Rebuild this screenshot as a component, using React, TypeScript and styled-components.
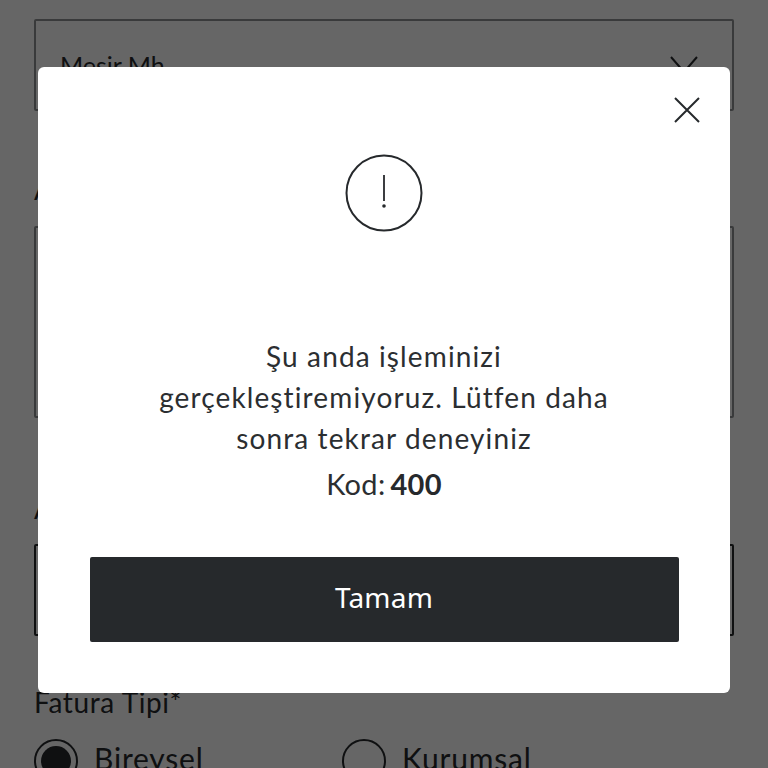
import React from "react";
import styled, { createGlobalStyle } from "styled-components";

const Global = createGlobalStyle`
  html, body { margin: 0; padding: 0; background: #fff; }
  body { font-family: "Lato", "Noto Sans", sans-serif; color: #26292c; width: 768px; height: 768px; overflow: hidden; }
`;

const Form = styled.div`
  box-sizing: border-box;
  width: 768px;
  height: 768px;
  overflow: hidden;
  padding: 19px 34px 0;
  display: flex;
  flex-direction: column;
`;

const Field = styled.div<{ $h: number; $dark?: boolean; $mb: number }>`
  box-sizing: border-box;
  flex: none;
  height: ${(p) => p.$h}px;
  margin-bottom: ${(p) => p.$mb}px;
  border: 2px solid ${(p) => (p.$dark ? "#26292c" : "#8f9193")};
  border-radius: 2px;
  padding: 26px 32px 0 24px;
  display: flex;
  justify-content: space-between;
  font-size: 25px;
  line-height: 36px;
`;

const Label = styled.div<{ $mb: number }>`
  flex: none;
  font-size: 28px;
  letter-spacing: 0.6px;
  line-height: 36px;
  margin-bottom: ${(p) => p.$mb}px;
`;

const RadioRow = styled.div`
  flex: none;
  display: flex;
  margin-top: 19px;
`;

const RadioItem = styled.div`
  width: 308px;
  display: flex;
  align-items: flex-start;
  gap: 16px;
  font-size: 30px;
  letter-spacing: 0.8px;
  line-height: 38px;
`;

const Radio = styled.span<{ $on?: boolean }>`
  box-sizing: border-box;
  width: 44px;
  height: 44px;
  border-radius: 50%;
  border: 2px solid #26292c;
  display: flex;
  align-items: center;
  justify-content: center;
  &::after {
    content: "";
    width: 30px;
    height: 30px;
    border-radius: 50%;
    background: ${(p) => (p.$on ? "#26292c" : "transparent")};
  }
`;

const Overlay = styled.div`
  position: fixed;
  inset: 0;
  background: rgba(0, 0, 0, 0.6);
  display: flex;
  align-items: flex-start;
  justify-content: center;
`;

const Modal = styled.div`
  position: relative;
  box-sizing: border-box;
  margin-top: 67px;
  width: 692px;
  height: 626px;
  background: #fff;
  border-radius: 6px;
  padding: 87px 51px 0;
  display: flex;
  flex-direction: column;
  align-items: center;
`;

const Close = styled.button`
  position: absolute;
  top: 29px;
  right: 29px;
  width: 28px;
  height: 28px;
  padding: 0;
  border: 0;
  background: none;
  display: flex;
`;

const Message = styled.div`
  margin-top: 104px;
  width: 464px;
  text-align: center;
  font-size: 28px;
  line-height: 41px;
  color: #2b2e31;
  letter-spacing: 1.12px;
`;

const Code = styled.div`
  margin-top: 4px;
  font-size: 29px;
  line-height: 41px;
  color: #2b2e31;
  display: flex;
  gap: 5px;
  letter-spacing: 0.3px;
`;

const CodeValue = styled.strong`
  font-weight: 700;
  color: #26292c;
`;

const OkButton = styled.button`
  margin-top: 53px;
  width: 589px;
  height: 85px;
  flex: none;
  border: 0;
  border-radius: 2px;
  padding: 0 0 5px;
  background: #26292c;
  color: #fff;
  font-family: "Noto Sans", sans-serif;
  font-size: 28px;
  letter-spacing: 0.2px;
`;

export default function App() {
  return (
    <>
      <Global />
      <Form>
        <Field $h={92} $mb={60}>
          <span>Mesir Mh.</span>
          <svg width="32" height="32" viewBox="0 0 32 32" fill="none" stroke="#26292c" strokeWidth="2">
            <path d="M3 10 L16 25 L29 10" />
          </svg>
        </Field>
        <Label $mb={19}>Adres*</Label>
        <Field $h={192} $mb={72} />
        <Label $mb={18}>Adres Başlığı*</Label>
        <Field $h={92} $dark $mb={48} />
        <Label $mb={0}>Fatura Tipi*</Label>
        <RadioRow>
          <RadioItem><Radio $on />Bireysel</RadioItem>
          <RadioItem><Radio />Kurumsal</RadioItem>
        </RadioRow>
      </Form>
      <Overlay>
        <Modal>
          <Close aria-label="Kapat">
            <svg width="28" height="28" viewBox="0 0 28 28" fill="none" stroke="#26292c" strokeWidth="2">
              <path d="M2 2 L26 26 M26 2 L2 26" />
            </svg>
          </Close>
          <svg width="78" height="78" viewBox="0 0 78 78" fill="none" stroke="#26292c" style={{ flex: "none" }}>
            <circle cx="39" cy="39" r="37.5" strokeWidth="2" />
            <path d="M39 21 V47" strokeWidth="1.8" />
            <circle cx="39" cy="52" r="1.8" fill="#26292c" stroke="none" />
          </svg>
          <Message>Şu anda işleminizi gerçekleştiremiyoruz. Lütfen daha sonra tekrar deneyiniz</Message>
          <Code>Kod: <CodeValue>400</CodeValue></Code>
          <OkButton>Tamam</OkButton>
        </Modal>
      </Overlay>
    </>
  );
}
